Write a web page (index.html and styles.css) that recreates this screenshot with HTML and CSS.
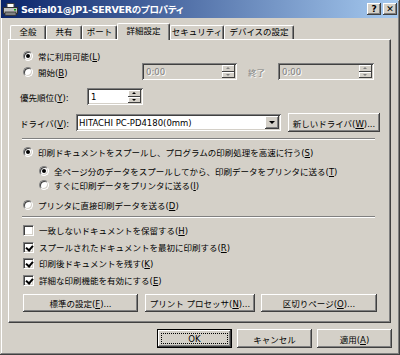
FILE: index.html
```html
<!DOCTYPE html>
<html lang="ja">
<head>
  <meta charset="UTF-8">
  <title>Serial01@JP1-SERVERのプロパティ</title>
  <link rel="stylesheet" href="styles.css">
</head>
<body>

  <div class="dialog">

    <!-- Title bar -->
    <div class="titlebar">
      <svg class="app-icon" width="15" height="13" viewBox="0 0 15 13">
        <rect x="4" y="0.5" width="7" height="5" fill="#fff" stroke="#404040"/>
        <rect x="0.5" y="4.5" width="14" height="6" fill="#c0c0c0" stroke="#303030"/>
        <rect x="2" y="9" width="11" height="3.5" fill="#808080" stroke="#303030" stroke-width="0.8"/>
        <rect x="11" y="6" width="2" height="1.5" fill="#00a000"/>
      </svg>
      <span class="title">Serial01@JP1-SERVERのプロパティ</span>
      <div class="caption-btns">
        <span class="cap-btn">?</span>
        <span class="cap-btn">✕</span>
      </div>
    </div>

    <!-- Tabs -->
    <div class="tabs">
      <span class="tab t-general">全般</span>
      <span class="tab t-share">共有</span>
      <span class="tab t-port">ポート</span>
      <span class="tab tab-active">詳細設定</span>
      <span class="tab t-security">セキュリティ</span>
      <span class="tab t-device">デバイスの設定</span>
    </div>

    <div class="panel">

      <div class="row row-avail">
        <span class="opt"><span class="radio checked"></span><span>常に利用可能(<u>L</u>)</span></span>
      </div>

      <div class="row row-start">
        <span class="opt start-opt"><span class="radio"></span><span>開始(<u>B</u>)</span></span>
        <div class="field time">
          <span class="field-text">0:00</span>
          <span class="spin"><span class="spin-up"></span><span class="spin-down"></span></span>
        </div>
        <span class="dim end-label">終了</span>
        <div class="field time time-end">
          <span class="field-text">0:00</span>
          <span class="spin"><span class="spin-up"></span><span class="spin-down"></span></span>
        </div>
      </div>

      <div class="row row-priority">
        <span class="label priority-label">優先順位(<u>Y</u>):</span>
        <div class="field priority">
          <span class="field-text">1</span>
          <span class="spin"><span class="spin-up"></span><span class="spin-down"></span></span>
        </div>
      </div>

      <div class="row row-driver">
        <span class="label driver-label">ドライバ(<u>V</u>):</span>
        <div class="field combo">
          <span class="field-text">HITACHI PC-PD4180(0mm)</span>
          <span class="drop-btn"><span class="arrow-down"></span></span>
        </div>
        <span class="btn new-driver"><span>新しいドライバ(<u>W</u>)...</span></span>
      </div>

      <div class="sep sep-top"></div>

      <div class="row row-spool">
        <span class="opt"><span class="radio checked"></span><span>印刷ドキュメントをスプールし、プログラムの印刷処理を高速に行う(<u>S</u>)</span></span>
      </div>
      <div class="row row-sub1">
        <span class="opt sub"><span class="radio checked"></span><span>全ページ分のデータをスプールしてから、印刷データをプリンタに送る(<u>T</u>)</span></span>
      </div>
      <div class="row row-sub2">
        <span class="opt sub"><span class="radio"></span><span>すぐに印刷データをプリンタに送る(<u>I</u>)</span></span>
      </div>
      <div class="row row-direct">
        <span class="opt"><span class="radio"></span><span>プリンタに直接印刷データを送る(<u>D</u>)</span></span>
      </div>

      <div class="sep sep-bottom"></div>

      <div class="row check-row cb1">
        <span class="opt"><span class="check"></span><span>一致しないドキュメントを保留する(<u>H</u>)</span></span>
      </div>
      <div class="row check-row cb2">
        <span class="opt"><span class="check checked"></span><span>スプールされたドキュメントを最初に印刷する(<u>R</u>)</span></span>
      </div>
      <div class="row check-row cb3">
        <span class="opt"><span class="check checked"></span><span>印刷後ドキュメントを残す(<u>K</u>)</span></span>
      </div>
      <div class="row check-row cb4">
        <span class="opt"><span class="check checked"></span><span>詳細な印刷機能を有効にする(<u>E</u>)</span></span>
      </div>

      <div class="row row-buttons">
        <span class="btn btn-defaults"><span>標準の設定(<u>F</u>)...</span></span>
        <span class="btn btn-processor"><span>プリント プロセッサ(<u>N</u>)...</span></span>
        <span class="btn btn-separator"><span>区切りページ(<u>O</u>)...</span></span>
      </div>

    </div>

    <!-- Dialog buttons -->
    <div class="footer">
      <span class="btn btn-default"><span class="focus">OK</span></span>
      <span class="btn">キャンセル</span>
      <span class="btn"><span>適用(<u>A</u>)</span></span>
    </div>

  </div>

</body>
</html>
```

FILE: styles.css
```css
/* General */
* {
  box-sizing: border-box;
}

body {
  margin: 0;
  background-color: #d4d0c8;
  font-family: "DejaVu Sans", "Noto Sans CJK JP", sans-serif;
  font-size: 8.5px;
  color: #000;
}

u {
  text-decoration: underline;
  text-underline-offset: 1px;
}

.dialog {
  width: 400px;
  height: 355px;
  background-color: #d4d0c8;
  box-shadow: inset -1px -1px #404040, inset 1px 1px #d4d0c8,
              inset -2px -2px #808080, inset 2px 2px #fff;
  display: flex;
  flex-direction: column;
  overflow: hidden;
}

/* Title bar */
.titlebar {
  height: 18px;
  margin: 0 2px 0 1px;
  padding: 0 1px 0 2px;
  background: linear-gradient(to right, #0a246a, #a6caf0);
  display: flex;
  align-items: center;
  color: #fff;
}

.app-icon {
  flex: none;
}

.title {
  margin-left: 3px;
  font-family: "DejaVu Sans", "Noto Sans CJK JP", sans-serif;
  font-weight: bold;
  font-size: 9.5px;
  letter-spacing: -0.3px;
  font-feature-settings: "palt";
  white-space: nowrap;
}

.caption-btns {
  margin-left: auto;
  display: flex;
  gap: 2px;
}

.cap-btn {
  width: 14px;
  height: 12px;
  background-color: #d4d0c8;
  box-shadow: inset -1px -1px #404040, inset 1px 1px #fff,
              inset -2px -2px #808080;
  color: #000;
  font-family: "DejaVu Sans", sans-serif;
  font-weight: bold;
  font-size: 9px;
  line-height: 12px;
  text-align: center;
}

/* Tabs */
.tabs {
  display: flex;
  align-items: flex-end;
  height: 16px;
  margin-top: 5px;
  padding-left: 10px;
  position: relative;
  z-index: 1;
}

.tab {
  height: 14px;
  line-height: 13px;
  text-align: center;
  border-top: 1px solid #fff;
  border-left: 1px solid #fff;
  border-right: 1px solid #404040;
  border-radius: 2px 2px 0 0;
  box-shadow: inset -1px 0 #808080;
  white-space: nowrap;
}

.t-general { width: 36px; }
.t-share { width: 36px; }
.t-port { width: 35px; }
.t-security { width: 54px; }
.t-device { width: 70px; }

.tab-active {
  width: 53px;
  height: 17px;
  line-height: 15px;
  margin-bottom: -1px;
  background-color: #d4d0c8;
}

/* Main panel */
.panel {
  height: 284px;
  margin: 0 9px 0 8px;
  padding: 8px 0 0 11px;
  border-top: 1px solid #fff;
  border-left: 1px solid #fff;
  border-right: 1px solid #404040;
  border-bottom: 1px solid #404040;
  box-shadow: inset -1px -1px #808080;
}

.row {
  display: flex;
  align-items: center;
  white-space: nowrap;
}

.row-avail { height: 15px; }
.row-start { height: 17px; }
.row-priority { height: 17px; margin-top: 8px; }
.row-driver { height: 19px; margin-top: 8px; }
.row-spool { height: 14px; margin-top: 5px; }
.row-sub1 { height: 14px; margin-top: 5px; }
.row-sub2 { height: 14px; }
.row-direct { height: 14px; margin-top: 6px; }
.check-row { height: 14px; }
.cb1 { margin-top: 5px; }
.cb2 { margin-top: 3px; }
.cb3 { margin-top: 2px; }
.cb4 { margin-top: 3px; }
.row-buttons { height: 18px; margin-top: 7px; }

.opt {
  display: flex;
  align-items: center;
  gap: 5px;
  margin-left: 3px;
}

.opt.sub {
  margin-left: 19px;
}

.start-opt {
  width: 119px;
}

/* Radio and check boxes */
.radio {
  position: relative;
  width: 10px;
  height: 10px;
  flex: none;
  border-radius: 50%;
  background-color: #fff;
  border: 1px solid;
  border-color: #808080 #fff #fff #808080;
  box-shadow: inset 1px 1px #404040, inset -1px -1px #d4d0c8;
}

.radio.checked::after {
  content: "";
  position: absolute;
  left: 2px;
  top: 2px;
  width: 4px;
  height: 4px;
  border-radius: 50%;
  background-color: #000;
}

.check {
  position: relative;
  width: 11px;
  height: 11px;
  flex: none;
  background-color: #fff;
  border: 1px solid;
  border-color: #808080 #fff #fff #808080;
  box-shadow: inset 1px 1px #404040, inset -1px -1px #d4d0c8;
}

.check.checked::after {
  content: "";
  position: absolute;
  left: 3px;
  top: 1px;
  width: 3px;
  height: 5px;
  border: solid #000;
  border-width: 0 2px 2px 0;
  transform: rotate(40deg);
}

/* Fields */
.field {
  position: relative;
  height: 17px;
  display: flex;
  align-items: center;
  background-color: #fff;
  box-shadow: inset 1px 1px #808080, inset -1px -1px #fff,
              inset 2px 2px #404040, inset -2px -2px #d4d0c8;
}

.field-text {
  padding-left: 4px;
}

.time {
  width: 95px;
  background-color: #d4d0c8;
  color: #808080;
}

.time-end {
  width: 96px;
  margin-left: 13px;
}

.dim {
  color: #808080;
  text-shadow: 1px 1px #fff;
}

.end-label {
  margin-left: 11px;
}

.time .field-text {
  text-shadow: 1px 1px #fff;
}

.label {
  display: inline-block;
}

.priority-label { width: 67px; }
.driver-label { width: 56px; }

.priority {
  width: 56px;
}

.spin {
  margin-left: auto;
  margin-right: 2px;
  width: 13px;
  height: 13px;
  display: flex;
  flex-direction: column;
}

.spin-up,
.spin-down {
  position: relative;
  flex: 1;
  background-color: #d4d0c8;
  box-shadow: inset -1px -1px #404040, inset 1px 1px #fff;
}

.spin-up::after,
.spin-down::after {
  content: "";
  position: absolute;
  left: 4px;
  top: 2px;
  border-left: 2px solid transparent;
  border-right: 2px solid transparent;
}

.spin-up::after {
  border-bottom: 2px solid #000;
}

.spin-down::after {
  border-top: 2px solid #000;
}

.time .spin-up::after {
  border-bottom-color: #808080;
}

.time .spin-down::after {
  border-top-color: #808080;
}

.combo {
  width: 205px;
}

.combo .field-text {
  padding-left: 3px;
}

.drop-btn {
  position: relative;
  margin-left: auto;
  margin-right: 2px;
  width: 14px;
  height: 13px;
  background-color: #d4d0c8;
  box-shadow: inset -1px -1px #404040, inset 1px 1px #fff,
              inset -2px -2px #808080;
}

.arrow-down {
  position: absolute;
  left: 4px;
  top: 5px;
  border-left: 3px solid transparent;
  border-right: 3px solid transparent;
  border-top: 3px solid #000;
}

/* Buttons */
.btn {
  display: flex;
  align-items: center;
  justify-content: center;
  height: 19px;
  width: 75px;
  background-color: #d4d0c8;
  box-shadow: inset -1px -1px #404040, inset 1px 1px #fff,
              inset -2px -2px #808080;
  white-space: nowrap;
}

.new-driver {
  width: 92px;
  margin-left: 7px;
}

.row-buttons .btn {
  height: 18px;
}

.btn-defaults {
  width: 115px;
  margin-left: 3px;
}

.btn-processor {
  width: 110px;
  margin-left: 7px;
}

.btn-separator {
  width: 116px;
  margin-left: 6px;
}

/* Separators */
.sep {
  width: 353px;
  height: 2px;
  margin-left: 2px;
  border-top: 1px solid #808080;
  border-bottom: 1px solid #fff;
}

.sep-top { margin-top: 6px; }
.sep-bottom { margin-top: 4px; }

/* Footer */
.footer {
  display: flex;
  justify-content: flex-end;
  gap: 5px;
  margin-top: 6px;
  padding-right: 8px;
}

.btn-default {
  border: 1px solid #000;
  box-shadow: inset -1px -1px #404040, inset 1px 1px #fff,
              inset -2px -2px #808080;
  padding: 3px;
}

.focus {
  width: 100%;
  height: 100%;
  display: flex;
  align-items: center;
  justify-content: center;
  border: 1px dotted #000;
}
```
